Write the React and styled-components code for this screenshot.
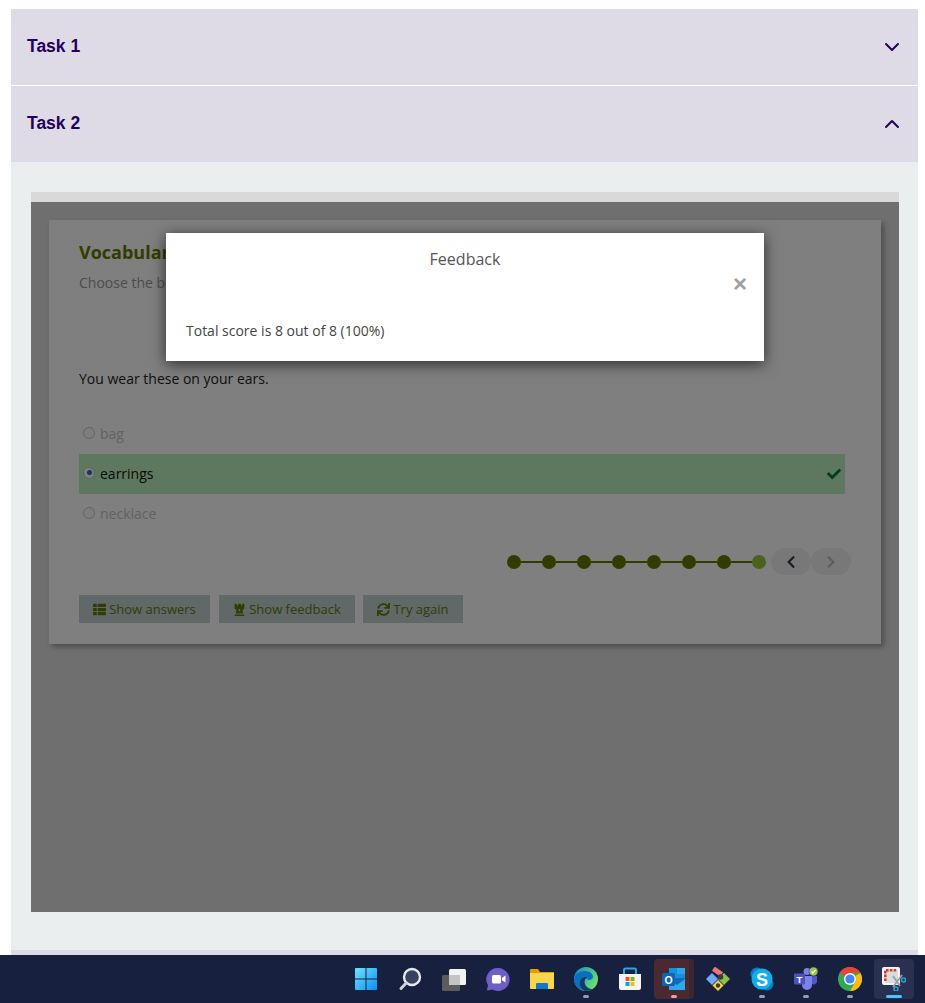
import React from "react";
import styled, { createGlobalStyle } from "styled-components";
import { FaThList, FaChessRook, FaSync, FaCheck, FaChevronLeft, FaChevronRight } from "react-icons/fa";

const GlobalStyle = createGlobalStyle`
  html, body {
    margin: 0;
    padding: 0;
    height: 100%;
    background: #fff;
    font-family: "Open Sans", "Liberation Sans", sans-serif;
  }
  * { box-sizing: border-box; }
`;

const Page = styled.div`
  display: flex;
  flex-direction: column;
  height: 1003px;
  overflow: hidden;
`;

const Content = styled.div`
  flex: 1;
  min-height: 0;
  overflow: hidden;
  padding: 9px 7px 0 11px;
`;

const AccordionHeads = styled.div`
  display: flex;
  flex-direction: column;
  gap: 1px;
`;

const AccordionHead = styled.div`
  display: flex;
  align-items: center;
  justify-content: space-between;
  height: 76px;
  padding: 0 18px 2px 16px;
  background: #dfdbe6;
  color: #24005a;
  font-family: "Liberation Sans", Arial, sans-serif;
  font-size: 17.5px;
  font-weight: 700;
`;

const Chevron = styled.svg`
  width: 16px;
  height: 10px;
  margin-top: 2px;
  fill: none;
  stroke: #24005a;
  stroke-width: 2;
  stroke-linecap: round;
  stroke-linejoin: round;
`;

const Panel = styled.div`
  padding: 30px 19px 38px 20px;
  background: #eaeeef;
  border-bottom: 5px solid #dfdbe6;
`;

const TopBar = styled.div`
  height: 10px;
  background: #d9d9d9;
`;

const Stage = styled.div`
  position: relative;
  height: 710px;
  padding: 18px;
  background: #dedede;
`;

const Card = styled.div`
  height: 424px;
  padding: 20px 36px 0 30px;
  background: #fff;
  box-shadow: 3px 3px 5px rgba(0, 0, 0, 0.3);
`;

const Title = styled.h2`
  margin: 0;
  color: #627a00;
  font-size: 18px;
  font-weight: 700;
  line-height: 24px;
`;

const Intro = styled.p`
  margin: 9px 0 0;
  color: #999;
  font-size: 14px;
  line-height: 20px;
`;

const Question = styled.p`
  margin: 76px 0 0;
  color: #222;
  font-size: 14px;
  line-height: 20px;
`;

const Options = styled.div`
  display: flex;
  flex-direction: column;
  margin-top: 25px;
`;

const Option = styled.div`
  display: flex;
  align-items: center;
  height: 40px;
  padding: 0 4px 2px;
  gap: 5px;
  background: ${(p) => (p.$correct ? "#bcf1c0" : "transparent")};
  color: ${(p) => (p.$correct ? "#111" : "#c6c6c6")};
  font-size: 14px;
`;

const Radio = styled.span`
  flex: none;
  display: flex;
  align-items: center;
  justify-content: center;
  width: 12px;
  height: 12px;
  margin: -1px 0 0;
  border-radius: 50%;
  border: 1px solid #c8c8c8;
  background: ${(p) => (p.$checked ? "#fff" : "#fafafa")};
  &::after {
    content: "";
    display: ${(p) => (p.$checked ? "block" : "none")};
    width: 5px;
    height: 5px;
    border-radius: 50%;
    background: #1a73c8;
  }
`;

const CheckMark = styled(FaCheck)`
  margin: 2px 0 0 auto;
  color: #007a3a;
  font-size: 14px;
`;

const ProgressRow = styled.div`
  display: flex;
  align-items: center;
  justify-content: flex-end;
  margin: 14px -6px 0 0;
`;

const Dots = styled.div`
  display: flex;
  align-items: center;
  margin-right: 5px;
`;

const Dot = styled.span`
  width: 14px;
  height: 14px;
  border-radius: 50%;
  background: ${(p) => (p.$current ? "#9cc238" : "#627a00")};
`;

const Link = styled.span`
  width: 21px;
  height: 2px;
  background: #627a00;
`;

const NavButton = styled.span`
  display: flex;
  align-items: center;
  justify-content: center;
  width: 40px;
  height: 27px;
  border-radius: 14px;
  background: #f0f0f0;
  color: ${(p) => (p.$disabled ? "#bbb" : "#333c4d")};
  font-size: 14px;
`;

const Actions = styled.div`
  display: flex;
  margin-top: 20px;
`;

const ActionButton = styled.span`
  display: flex;
  align-items: center;
  justify-content: center;
  gap: 3px;
  width: ${(p) => p.$w}px;
  height: 28px;
  margin-right: ${(p) => p.$gap}px;
  background: #c2d0d0;
  color: #627a00;
  font-size: 13px;
`;

const Overlay = styled.div`
  position: absolute;
  inset: 0;
  background: rgba(0, 0, 0, 0.5);
`;

const Modal = styled.div`
  position: absolute;
  left: 135px;
  top: 31px;
  width: 598px;
  height: 128px;
  padding: 15px 20px 0;
  background: #fff;
  box-shadow: 0 3px 14px rgba(0, 0, 0, 0.65);
`;

const ModalTitle = styled.div`
  color: #555;
  font-size: 16px;
  font-weight: 400;
  line-height: 22px;
  text-align: center;
`;

const ModalClose = styled.span`
  position: absolute;
  right: 17px;
  top: 39px;
  color: #a0a0a0;
  font-family: "Liberation Sans", Arial, sans-serif;
  font-size: 24px;
  font-weight: 700;
  line-height: 24px;
`;

const ModalText = styled.p`
  margin: 51px 0 0;
  color: #444;
  font-size: 14px;
  line-height: 20px;
`;

const Taskbar = styled.div`
  flex: none;
  display: flex;
  justify-content: flex-end;
  align-items: center;
  height: 48px;
  padding-right: 9px;
  background: #18203f;
`;

const TaskItem = styled.div`
  position: relative;
  display: flex;
  align-items: center;
  justify-content: center;
  width: 40px;
  height: 40px;
  margin: 0 2px;
  border-radius: 4px;
  background: ${(p) => p.$bg || "transparent"};
  svg { width: 24px; height: 24px; display: block; }
`;

const Pip = styled.span`
  position: absolute;
  left: 50%;
  bottom: 1px;
  width: ${(p) => (p.$active ? 16 : 6)}px;
  height: 3px;
  margin-left: ${(p) => (p.$active ? -8 : -3)}px;
  border-radius: 2px;
  background: ${(p) => p.$color};
`;

const WindowsIcon = () => (
  <svg viewBox="0 0 24 24">
    <defs>
      <linearGradient id="win" x1="0" y1="0" x2="1" y2="1">
        <stop offset="0" stopColor="#6ce4fb" />
        <stop offset="1" stopColor="#0f8cf5" />
      </linearGradient>
    </defs>
    <path fill="url(#win)" d="M1 2a1 1 0 0 1 1-1h9.500v10.500H1zM12.500 1H22a1 1 0 0 1 1 1v9.500H12.500zM1 12.500h10.500V23H2a1 1 0 0 1-1-1zM12.500 12.500H23V22a1 1 0 0 1-1 1h-9.500z" />
  </svg>
);

const SearchIcon = () => (
  <svg viewBox="0 0 24 24">
    <circle cx="14" cy="10" r="8" fill="#3a4160" stroke="#e6e8ee" strokeWidth="2.400" />
    <path d="M8.200 16 3 21.500" stroke="#d0d2d8" strokeWidth="3" strokeLinecap="round" />
  </svg>
);

const TaskViewIcon = () => (
  <svg viewBox="0 0 24 24">
    <rect x="7" y="2" width="17" height="16" rx="1.500" fill="#f2f2f2" />
    <rect x="0" y="8" width="18" height="16" rx="1.500" fill="#5c5c5c" />
    <rect x="7" y="8" width="11" height="10" fill="#c4c4c4" />
  </svg>
);

const ChatIcon = () => (
  <svg viewBox="0 0 24 24">
    <path fill="#6d5fc7" d="M12 1a11.500 11.500 0 1 1-5.600 21.500L2 23.500c-.7.100-1.100-.4-1-1l1-4A11.500 11.500 0 0 1 12 1z" />
    <rect x="6" y="8" width="9" height="8.500" rx="1.500" fill="#fff" />
    <path fill="#fff" d="m16 11 3.500-2.400v7L16 13.200z" />
  </svg>
);

const FolderIcon = () => (
  <svg viewBox="0 0 24 24">
    <path fill="#e0a100" d="M0 3a1 1 0 0 1 1-1h7l2 3h14v5H0z" />
    <path fill="#fdd44d" d="M0 6h24v15a1 1 0 0 1-1 1H1a1 1 0 0 1-1-1z" />
    <path fill="#0f78c9" d="M6 17a1 1 0 0 1 1-1h10a1 1 0 0 1 1 1v5H6z" />
  </svg>
);

const EdgeIcon = () => (
  <svg viewBox="0 0 24 24">
    <defs>
      <linearGradient id="edgeTop" x1="0" y1="0" x2="1" y2="0.600">
        <stop offset="0" stopColor="#0c8bc9" />
        <stop offset="1" stopColor="#6fe06a" />
      </linearGradient>
    </defs>
    <circle cx="12" cy="12" r="12" fill="url(#edgeTop)" />
    <path fill="#0a6fc2" d="M0 12C1 6 6 4 11 4c5 0 8 3 8 6 0 2-2 3-5 3-1 0-1-1 0-2-2-2-7-1-8 3-1 4 2 9 8 10C6 24 0 19 0 12z" />
    <path fill="#14396e" d="M6 14c1-4 6-5 8-3-3 0-4 3-3 6 1 3 4 5 8 5-2 1.300-4 2-7 2-5-1-7-6-6-10z" />
  </svg>
);

const StoreIcon = () => (
  <svg viewBox="0 0 24 24">
    <path fill="none" stroke="#28a8ea" strokeWidth="2" d="M6 8V3a1.500 1.500 0 0 1 1.500-1.500h9A1.500 1.500 0 0 1 18 3v5" />
    <path fill="#f4f4f4" d="M1 7h22v14a2 2 0 0 1-2 2H3a2 2 0 0 1-2-2z" />
    <rect x="7.500" y="10" width="4" height="4" fill="#f25022" />
    <rect x="12.500" y="10" width="4" height="4" fill="#7fba00" />
    <rect x="7.500" y="15" width="4" height="4" fill="#00a4ef" />
    <rect x="12.500" y="15" width="4" height="4" fill="#ffb900" />
  </svg>
);

const OutlookIcon = () => (
  <svg viewBox="0 0 24 24">
    <rect x="7" y="1" width="16" height="11" fill="#1490df" />
    <rect x="15" y="1" width="8" height="6" fill="#28a8ea" />
    <path fill="#0f6cbd" d="M7 11h16v11a1 1 0 0 1-1 1H8a1 1 0 0 1-1-1z" />
    <path fill="#2ea8e8" d="m7 12 8 6 8-6v11H8a1 1 0 0 1-1-1z" />
    <rect x="0" y="6" width="13" height="13" rx="1.500" fill="#0e64b4" />
    <text x="6.500" y="16.500" textAnchor="middle" fill="#fff" fontFamily="Liberation Sans" fontWeight="700" fontSize="10.500">O</text>
  </svg>
);

const DiamondsIcon = () => (
  <svg viewBox="0 0 24 24">
    <rect x="6.500" y="2" width="10" height="5" rx="0.500" fill="#e9747f" transform="rotate(35 11.500 4.500)" />
    <path fill="#6ea8fa" d="m6 6 6 6-6 6-6-6z" />
    <path fill="#8bc34a" d="m18 6 6 6-6 6-6-6z" />
    <circle cx="14.500" cy="10" r="2.800" fill="#3b3b3b" />
    <path fill="#f3d34a" d="m12 13 5.500 5.500L12 24l-5.500-5.500z" />
    <circle cx="12" cy="18.500" r="2.200" fill="#3b3b3b" />
  </svg>
);

const SkypeIcon = () => (
  <svg viewBox="0 0 24 24">
    <circle cx="7" cy="7" r="6.500" fill="#0a7cc1" />
    <circle cx="17" cy="17" r="6.500" fill="#0a7cc1" />
    <circle cx="12" cy="12" r="10.500" fill="#12aeea" />
    <text x="12" y="18.500" textAnchor="middle" fill="#fff" fontFamily="Liberation Sans" fontWeight="700" fontSize="18">S</text>
  </svg>
);

const TeamsIcon = () => (
  <svg viewBox="0 0 24 24">
    <circle cx="13" cy="4.500" r="3.500" fill="#7b83eb" />
    <path fill="#7b83eb" d="M8 9h10v9a5 5 0 0 1-10 0z" />
    <path fill="#5059c9" d="M18 9h5v6a3.500 3.500 0 0 1-5 2z" />
    <rect x="0" y="6.500" width="11" height="11" rx="1" fill="#4b53bc" />
    <text x="5.500" y="15.500" textAnchor="middle" fill="#fff" fontFamily="Liberation Sans" fontWeight="700" fontSize="9.500">T</text>
    <circle cx="19.500" cy="4.500" r="4.500" fill="#92c353" stroke="#18203f" strokeWidth="0.500" />
    <path d="m17.500 4.500 1.500 1.500 2.500-3" fill="none" stroke="#fff" strokeWidth="1.200" />
  </svg>
);

const ChromeIcon = () => (
  <svg viewBox="0 0 24 24">
    <circle cx="12" cy="12" r="12" fill="#34a853" />
    <path fill="#ea4335" d="M12 0a12 12 0 0 1 10.400 6H12a6 6 0 0 0-5.200 3L1.600 6A12 12 0 0 1 12 0z" />
    <path fill="#fbbc05" d="M22.400 6A12 12 0 0 1 12 24l5.200-9a6 6 0 0 0 0-6z" />
    <circle cx="12" cy="12" r="6" fill="#fff" />
    <circle cx="12" cy="12" r="4.600" fill="#4285f4" />
  </svg>
);

const SnipIcon = () => (
  <svg viewBox="0 0 24 24">
    <rect x="0" y="0" width="18" height="18" rx="2" fill="#f3f3f3" />
    <rect x="3" y="3" width="13" height="13" rx="1" fill="#dcdcdc" />
    <path fill="none" stroke="#d13a2a" strokeWidth="2.600" strokeDasharray="2.600 1.200" d="M3.300 14V3.300h11.500" />
    <path fill="none" stroke="#9aa0a8" strokeWidth="1.800" d="m11 9 7 10M20 8l-9 12" />
    <circle cx="21.500" cy="13" r="2" fill="none" stroke="#2aa0e0" strokeWidth="1.500" />
    <circle cx="14" cy="22" r="2" fill="none" stroke="#2aa0e0" strokeWidth="1.500" />
  </svg>
);

const taskItems = [
  { name: "start", Icon: WindowsIcon },
  { name: "search", Icon: SearchIcon },
  { name: "taskview", Icon: TaskViewIcon },
  { name: "chat", Icon: ChatIcon },
  { name: "files", Icon: FolderIcon },
  { name: "edge", Icon: EdgeIcon, pip: "#9a9da8" },
  { name: "store", Icon: StoreIcon },
  { name: "outlook", Icon: OutlookIcon, pip: "#f09aa8", bg: "linear-gradient(90deg, #4a2a30 88%, #3c2630 88%)" },
  { name: "git", Icon: DiamondsIcon },
  { name: "skype", Icon: SkypeIcon, pip: "#9a9da8" },
  { name: "teams", Icon: TeamsIcon, pip: "#9a9da8" },
  { name: "chrome", Icon: ChromeIcon, pip: "#9a9da8" },
  { name: "snip", Icon: SnipIcon, pip: "#4cc2ff", active: true, bg: "#2a3150" },
];

const options = [
  { label: "bag" },
  { label: "earrings", correct: true },
  { label: "necklace" },
];

function App() {
  return (
    <Page>
      <GlobalStyle />
      <Content>
        <AccordionHeads>
          <AccordionHead>
            Task 1
            <Chevron viewBox="0 0 16 10"><path d="m2 2 6 6 6-6" /></Chevron>
          </AccordionHead>
          <AccordionHead>
            Task 2
            <Chevron viewBox="0 0 16 10"><path d="m2 8 6-6 6 6" /></Chevron>
          </AccordionHead>
        </AccordionHeads>
        <Panel>
          <TopBar />
          <Stage>
            <Card>
              <Title>Vocabulary</Title>
              <Intro>Choose the best answer.</Intro>
              <Question>You wear these on your ears.</Question>
              <Options>
                {options.map((o) => (
                  <Option key={o.label} $correct={o.correct}>
                    <Radio $checked={o.correct} />
                    {o.label}
                    {o.correct && <CheckMark />}
                  </Option>
                ))}
              </Options>
              <ProgressRow>
                <Dots>
                  {[0, 1, 2, 3, 4, 5, 6, 7].map((i) => (
                    <React.Fragment key={i}>
                      {i > 0 && <Link />}
                      <Dot $current={i === 7} />
                    </React.Fragment>
                  ))}
                </Dots>
                <NavButton><FaChevronLeft /></NavButton>
                <NavButton $disabled><FaChevronRight /></NavButton>
              </ProgressRow>
              <Actions>
                <ActionButton $w={131} $gap={9}><FaThList />Show answers</ActionButton>
                <ActionButton $w={136} $gap={8}><FaChessRook />Show feedback</ActionButton>
                <ActionButton $w={100} $gap={0}><FaSync />Try again</ActionButton>
              </Actions>
            </Card>
            <Overlay />
            <Modal>
              <ModalTitle>Feedback</ModalTitle>
              <ModalClose>×</ModalClose>
              <ModalText>Total score is 8 out of 8 (100%)</ModalText>
            </Modal>
          </Stage>
        </Panel>
      </Content>
      <Taskbar>
        {taskItems.map(({ name, Icon, pip, bg, active }) => (
          <TaskItem key={name} $bg={bg}>
            <Icon />
            {pip && <Pip $color={pip} $active={active} />}
          </TaskItem>
        ))}
      </Taskbar>
    </Page>
  );
}

export default App;
